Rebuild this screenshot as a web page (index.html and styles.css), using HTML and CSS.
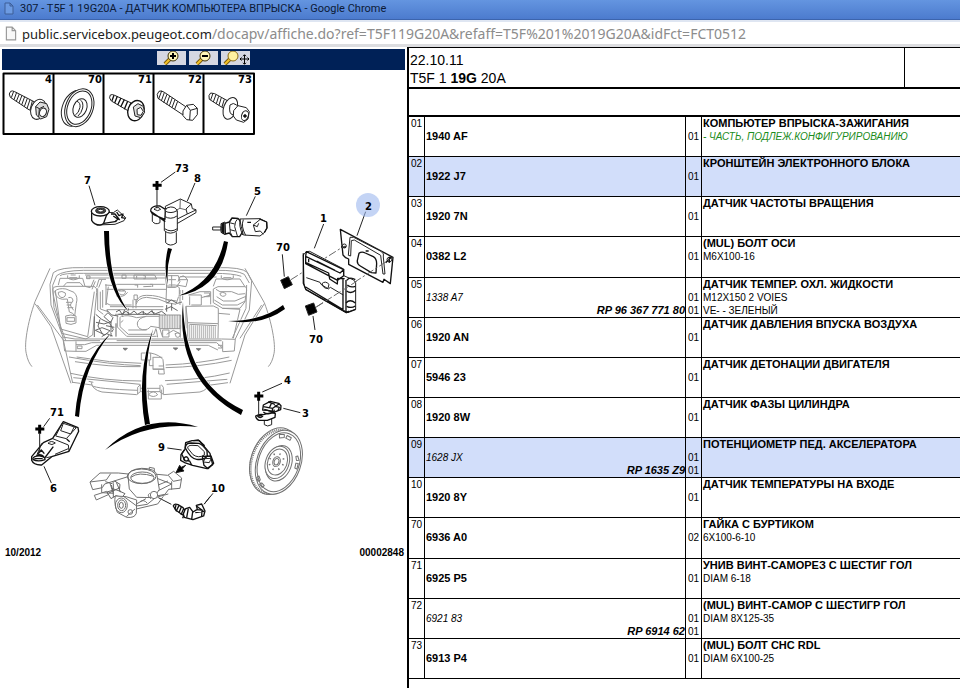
FILE: index.html
```html
<!DOCTYPE html>
<html lang="ru">
<head>
    <meta charset="UTF-8">
    <meta name="viewport" content="width=device-width, initial-scale=1.0">
    <title>307 - T5F 1 19G20A - ДАТЧИК КОМПЬЮТЕРА ВПРЫСКА</title>
    <link rel="stylesheet" href="styles.css">
</head>
<body>
    <header class="title-bar">
        <svg class="page-icon" viewBox="0 0 10 13"><path d="M1 1h5l3 3v8H1zM6 1v3h3"/></svg>
        <span>307 - T5F 1 19G20A - ДАТЧИК КОМПЬЮТЕРА ВПРЫСКА - Google Chrome</span>
    </header>
    <div class="address-bar">
        <svg class="page-icon light" viewBox="0 0 10 13"><path d="M1 1h5l3 3v8H1zM6 1v3h3"/></svg>
        <span><span class="host">public.servicebox.peugeot.com</span>/docapv/affiche.do?ref=T5F119G20A&amp;refaff=T5F%201%2019G20A&amp;idFct=FCT0512</span>
    </div>
    <main class="content">
        <section class="diagram">
            <div class="toolbar">
                <button class="tool" aria-label="Zoom in">
                    <svg viewBox="0 0 29 14"><path class="handle-edge" d="M13 8L8 13"/><path class="handle" d="M13 8L8 13"/><circle class="lens" cx="16" cy="5" r="5"/><path class="sign" d="M13 5h6M16 2v6"/></svg>
                </button>
                <button class="tool" aria-label="Zoom out">
                    <svg viewBox="0 0 29 14"><path class="handle-edge" d="M13 8L8 13"/><path class="handle" d="M13 8L8 13"/><circle class="lens" cx="16" cy="5" r="5"/><path class="sign" d="M13 5h6"/></svg>
                </button>
                <button class="tool" aria-label="Move">
                    <svg viewBox="0 0 29 14"><path class="handle-edge" d="M9 8L4 13"/><path class="handle" d="M9 8L4 13"/><circle class="lens plain" cx="12" cy="5" r="5"/><path class="move" d="M19 8h9M23.500 4v9M20.500 6.500L19 8l1.500 1.500M26.500 6.500L28 8l-1.500 1.500M22 5.200l1.500-1.500L25 5.200M22 11.800l1.500 1.500 1.500-1.500"/></svg>
                </button>
            </div>
            <svg class="drawing" viewBox="0 70 406 490">
                <!-- fastener legend -->
                <g class="frame"><path d="M3.500 73.500H254V134H3.500zM53.500 73v61M103.500 73v61M153.500 73v61M203.500 73v61"/></g>
                <g class="part" transform="scale(.3333)">
                    <path d="M32 274Q24 281 31 292L88 330Q96 332 98 321L104 306L44 275Q37 271 32 274zM41 274L34 293M50 277L42 299M58 282L49 304M66 286L57 309M74 290L65 315M82 295L73 320M90 299L81 326M97 303L90 330"/>
                    <ellipse class="solid" cx="115" cy="328" rx="22" ry="31" transform="rotate(20 115 328)"/>
                    <path class="solid shade" d="M107 320L120 306L140 311L147 328L140 350L122 357L109 345z"/>
                    <path d="M107 320L118 326L116 351M118 326L132 319"/>
                    <ellipse class="solid" cx="129" cy="337" rx="10" ry="13" transform="rotate(20 129 337)"/>

                    <ellipse cx="225" cy="325" rx="38" ry="56" transform="rotate(22 225 325)"/>
                    <ellipse class="solid" cx="238" cy="323" rx="41" ry="59" transform="rotate(22 238 323)"/>
                    <ellipse cx="238" cy="323" rx="35" ry="52" transform="rotate(22 238 323)"/>
                    <ellipse cx="240" cy="324" rx="20" ry="29" transform="rotate(22 240 324)"/>
                    <path d="M231 304Q242 308 240 322Q236 340 226 345M241 300Q251 306 248 324Q244 340 234 348"/>

                    <path d="M331 285Q325 293 334 303L389 335L398 311L344 286Q336 282 331 285z"/>
                    <path class="heavy" d="M342 286L336 302M352 289L344 309M363 294L353 315M373 299L362 321M383 304L373 328M393 309L384 335"/>
                    <ellipse class="solid heavy" cx="408" cy="332" rx="24" ry="31" transform="rotate(20 408 332)"/>
                    <path class="solid shade" d="M400 321L414 311L430 319L434 337L422 353L405 348z"/>
                    <path class="solid" d="M411 328L422 322L430 334L423 346L412 344z"/>

                    <path d="M477 274Q468 282 474 295L548 344L560 322L493 277Q483 270 477 274zM485 273L476 297M493 278L484 303M501 283L491 308M509 288L500 313M517 293L508 318M525 299L516 323M533 304L524 328"/>
                    <path class="solid" d="M549 333L560 316L580 313L592 325L592 344L578 361L560 359L549 347zM560 316L571 331L569 360M571 331L592 325"/>

                    <path d="M632 279Q624 285 628 298L674 327L684 303L644 281zM639 280L632 300M648 284L640 306M656 289L649 311M664 293L657 316M673 298L666 321"/>
                    <ellipse class="solid" cx="691" cy="325" rx="20" ry="34" transform="rotate(20 691 325)"/>
                    <path class="solid" d="M690 315Q700 306 710 315L717 322L710 350L700 345Q685 343 690 315z"/>
                    <path class="solid" d="M701 332L714 317L739 323L748 335L744 357L731 367L709 360L700 348z"/>
                    <ellipse cx="735" cy="347" rx="10" ry="15" transform="rotate(20 735 347)"/><circle class="fill" cx="735" cy="348" r="4"/>
                </g>

                <!-- engine bay -->
                <g class="car" transform="translate(0 255) scale(.3333)">
                    <path d="M150 40L105 140C82 205 72 270 79 296Q84 322 96 335M105 146L153 215L213 385M112 150L190 255L218 384M735 40L793 143C815 200 828 270 822 296Q817 322 805 335M793 146L735 240L690 385M785 150L720 250"/>
                    <path d="M150 88L160 53Q180 36 250 38H650Q725 36 742 52L755 78M158 91L170 62Q188 47 250 46H650Q710 45 733 58L748 84M180 62Q190 54 250 55H640Q700 55 724 64M255 60H500M258 69H500M555 66H650"/>
                    <path d="M150 88L153 150L188 243L194 288L228 289V259M158 91L162 158L197 256M755 78L748 165L706 252L703 288L668 290V259M740 90L738 160L697 250"/>
                    <path d="M175 90L180 70H248L255 94L270 98M190 94L200 83H240L250 94M203 61V69Q219 80 238 69V61M208 68h24M212 60h15M640 94L648 72H720L735 95M664 61V69Q681 80 700 69V61M670 68h24"/>
                    <path d="M158 102Q160 94 174 94H280Q292 96 290 112L278 240L258 252L185 235L160 120zM166 106L182 222L263 245L283 110"/>
                    <path d="M164 109Q175 98 198 102L222 112Q235 125 229 145L224 183Q220 173 208 171L202 132Q168 138 164 109zM175 112Q186 106 196 114Q199 126 186 128Q174 124 175 112zM205 128Q218 124 219 138L210 150L221 166M198 142h18M200 150h14M202 158h18M197 183Q213 177 228 183V204Q213 212 198 205zM201 188h23v11h-23z"/>
                    <path d="M290 96L297 73L318 73M272 98L282 74M276 103L286 79M296 98L306 73M301 110V162L324 170M308 105V158M293 100V165L310 178M318 88V150M315 90L345 92L352 88H495M318 150L325 95M320 103L500 103M320 145L330 150H395M330 155H490M320 164H490"/>
                    <path d="M260 63h10v8h-10zM366 60h12v10h-12zM402 60h62l6 12h-68zM410 63v8M430 62h6v9h-6M430 95L455 94M404 90h9v8M450 88h8v8M496 62L535 62L540 80L530 96H500zM505 74h23M515 60V95M530 90L558 95L563 75L555 65L540 65L534 80M536 74h26M542 66Q550 59 556 66"/>
                    <path d="M500 90H526L538 98V118L528 148L498 142zM503 97H527M498 133L530 138M408 142Q415 120 440 121Q475 120 510 138M408 148Q415 128 440 127Q475 128 508 145M402 120h10v14h-10zM399 134V160M408 134V160M352 108Q365 100 376 108Q378 118 366 120Q352 117 352 108M357 108h16M348 122Q370 130 383 112"/>
                    <path d="M345 178H370L360 188V215L385 238H462L468 220M352 182V216L380 244H470M366 185Q380 178 410 188L440 184H478M370 196L362 203M440 184Q416 188 412 204Q411 220 427 224Q445 226 452 214L478 218M478 180H542V221H478zM385 225H440"/>
                    <path class="ribs" d="M483 180V221M488 180V221M493 180V221M498 180V221M503 180V221M508 180V221M513 180V221M518 180V221M523 180V221M528 180V221M533 180V221M538 180V221"/>
                    <path d="M566 120L600 110H632V148M566 120H604V150H574M569 124V150M604 128L632 120M612 114h17v11h-17M558 154L640 153L655 160V206L563 203zM563 203V250M568 208L650 212M655 206L654 250M558 154V220"/>
                    <path class="ribs" d="M568 210V250M574 210V250M580 211V250M586 211V250M592 211V250M598 211V250M604 212V250M610 212V250M616 212V250M622 213V250M628 213V250M634 213V250M640 214V250M646 214V250"/>
                    <path d="M640 102L654 95H735Q741 96 740 106L735 140L720 160H668L640 143zM648 103L660 110H695L715 118L735 116M650 125L670 138H705L738 124M643 135L667 150H712L736 138M660 115Q668 109 677 115Q680 123 668 124Q659 122 660 115M667 160L720 163L700 250M655 175L690 178"/>
                    <path class="dark" d="M348 171l10-6 8 12 12-8 12 9 12-10 11 10 13-8 15 8 12-9 14 7 18-7 13 10M355 178h125M374 164l-5 14M385 160v20M430 168v12M455 165l8 14M287 178l18 15 24 12 11 18-10 18M288 202l24 5 21-7M283 184v62M300 193l-6 20 14 25M312 185l12-12 15 15-7 15zM286 226l20-8 24 9-15 13zM318 212l25 5M333 200v45M348 205v40M305 245l15-9 18 7M320 165l15 15 20 3M500 145l14-10 18 10 14-4M495 163l18-8 20 12M500 150v20M515 145v22"/>
                    <path d="M469 223L473 247M480 222L488 247M488 225h19v21h-19zM500 238l20-12 20 10M525 236Q535 230 541 238Q539 250 529 246zM540 105V150M548 105V135M541 210V248M552 210V248"/>
                    <path d="M188 246L225 252H665L705 253M190 257H300M350 257H665M228 269H254L275 263H650L665 277M232 273h14v8h-14zM654 271h12v8h-12M228 289H258L290 271H625L654 285"/>
                    <path d="M207 306Q330 329 422 332M230 306Q330 324 424 325M225 320Q330 337 422 335M497 330Q600 326 688 306M497 338Q600 336 695 316M212 355Q310 378 424 378M495 377Q602 375 689 354M220 368L420 388M500 388L682 373M218 382L276 390M684 383L626 391"/>
                    <path d="M424 294H452V315H424zM452 294Q480 300 489 314L493 357H476V346M458 307H487M458 343H493M448 315V332H460M459 307V342H492M476 333H490"/>
                    <path d="M274 382Q276 404 306 411L410 419L421 410V389L413 397V418M266 379L280 382M276 392Q290 402 413 406M490 419L600 411Q626 404 628 382M484 389L490 397V418L480 411V390M421 400H480M421 410H480M445 404V432H484V404M446 419Q460 402 473 419Q460 430 446 419"/>
                    <path class="holes" d="M369 280h13l-6 6zM520 279h13l-6 6zM589 281h13l-6 6z"/>
                </g>

                <!-- sensors above the engine -->
                <g class="part" transform="translate(0 150) scale(.3333)">
                    <path class="solid" d="M312 187L340 188L352 180L377 203L372 212L345 223L290 225z"/>
                    <path class="solid heavy" d="M275 182V211Q283 225 300 225Q311 224 313 214L319 197L328 185"/>
                    <ellipse class="solid heavy" cx="301" cy="184" rx="27" ry="14"/><ellipse class="dark" cx="302" cy="182" rx="15" ry="8"/><ellipse class="solid" cx="302" cy="182" rx="8" ry="4"/>
                    <path class="heavy" d="M340 198l14 10-8 6M350 186l7 11 12-5-4 11 12 2M333 192h12l14 18M312 220L350 214"/>
                    <path class="solid" d="M496 169L541 147L574 162L577 176L588 179V188L531 221L520 208L498 190zM574 162L558 177L562 192L530 208M588 180L562 192"/>
                    <path class="thin" d="M541 147L540 175L515 187M540 175L560 180"/>
                    <path class="solid" d="M457 191V214Q466 226 480 218V198M493 205V242Q510 257 532 242V182L495 182zM497 246V278Q510 292 529 279V247"/>
                    <path class="solid heavy" d="M453 177Q460 165 480 168L496 178L495 208L475 200Q447 190 453 177zM451 183L496 215"/>
                    <path class="solid" d="M495 183Q498 171 512 171Q528 171 531 182Q513 193 495 183zM494 199Q512 211 531 198M462 178Q472 166 482 178Q474 186 462 178zM494 236Q513 249 532 236"/>
                    <path class="line" d="M267 107L285 166M526 66L483 97M471 119V175M585 99L562 153"/>
                    <path class="cross" d="M458 106h27M471 93v27"/>
                </g>
                <g class="part" transform="translate(200 150) scale(.3333)">
                    <path class="solid" d="M38 231H63V240H38zM63 221L75 216V254L63 247z"/>
                    <path class="heavy" d="M66 220v28M70 218v34"/>
                    <path class="solid heavy" d="M75 220L88 216L96 204L114 205L124 218L130 242L119 260L97 260L88 249L76 252z"/>
                    <path class="solid" d="M119 207L180 206L200 216L201 234L193 248L180 258L130 255L124 230z"/>
                    <path d="M97 204L88 218L91 247L97 260M114 205Q104 214 104 230L112 258M88 218L104 222M90 239L105 243M121 208Q115 225 128 255M130 209Q122 229 137 256M182 207L160 225L166 245L181 243L190 253M160 225L172 230L176 220"/>
                    <path class="heavy" d="M142 217h11M178 207l22 9 1 18-8 14"/>
                    <path class="line" d="M166 139L139 197M371 222L343 295M497 185L471 257M247 313L253 380M339 498L345 540"/>
                    <path class="solid heavy" d="M421 238L579 322L571 401L552 388L549 397L446 343V327L437 323L429 315z"/>
                    <path class="solid" d="M450 262H461L543 304Q554 311 550 321L555 372H549L542 316L463 270L454 272L452 318L445 316z"/>
                    <path class="solid heavy" d="M477 310Q485 303 496 309L520 320Q530 326 530 341L528 369L514 368L481 348Q471 343 472 332z"/>
                    <circle cx="433" cy="288" r="6"/><circle cx="568" cy="329" r="7"/><path class="heavy" d="M557 338l18-18M568 320v18M423 291h15M497 303h9"/>
                    <path class="line thin" stroke-dasharray="24 7 7 7" d="M273 389L433 288M349 471L568 329"/>
                    <path class="solid" d="M310 315L319 305L329 304L431 357V377L461 390L467 398V478L439 488L317 418L312 402z"/>
                    <path class="heavy" d="M310 310V400L318 419L439 488L448 483M319 305L431 359L420 369L317 319zM431 357V377L413 391L317 341V320M318 338L386 369L389 387L412 402L413 385L434 386M429 388V479L317 411M438 390V486M326 323v14M350 333l55 28"/>
                    <path class="heavy" d="M440 391Q450 379 466 389M442 405Q450 414 466 409M440 423Q453 433 467 421M438 459Q450 446 466 459M440 469Q454 476 466 468M430 482l14 5 23-9"/>
                    <path d="M319 383L360 397L363 403L385 417L391 412L430 435M366 401Q376 391 387 403L384 415Q370 417 366 401z"/>
                    <path class="line thin" stroke-dasharray="24 7" d="M349 471L470 394"/>
                    <path class="fill" d="M242 391L265 380L277 404L253 416zM316 468L341 459L351 486L326 496z"/>
                </g>

                <!-- lower left: sensor and throttle body -->
                <g class="part" transform="translate(0 320) scale(.3333)">
                    <path class="solid heavy" d="M95 410L130 368L158 355L190 305L234 323L236 334L207 394L155 410L125 435Q101 436 95 421z"/>
                    <path d="M167 348L199 356L229 323L187 309zM158 356L205 375L207 393M125 370L110 407M190 310L182 332L212 342L223 320M155 410L139 413M165 403L205 386M144 370Q153 360 166 369Q157 378 144 370"/>
                    <path class="heavy" d="M98 418Q100 407 121 408Q137 411 135 419Q113 427 98 418M107 410Q119 398 132 410M113 402L124 390L133 401M103 416h25M200 357L209 365M134 414L160 380"/>
                    <path class="line" d="M149 295L131 320M119 341V400M132 439L154 489M502 384L545 390M475 533L514 553M630 530L613 552"/>
                    <path class="cross" d="M106 327h27M119 314v27"/>
                    <g class="grey">
                        <path class="solid" d="M384 468Q386 448 425 445Q467 445 471 466L478 508L465 529L495 523L506 508L540 505L545 474L521 454L503 466L471 463M384 468L388 507L410 532L465 533L505 522M384 462L355 459L300 459L270 486L278 509L307 503L314 492L384 470M270 486L319 480L332 461M305 493V518L340 520L330 490M283 526L320 514L325 524L289 540zM505 466L520 484L545 479M515 484V509M471 475L515 492L475 512M475 495L504 483"/>
                        <ellipse class="heavy" cx="425" cy="469" rx="43" ry="22"/><ellipse cx="427" cy="473" rx="35" ry="17"/><path d="M393 472Q415 454 461 469M448 449V442L463 445V457"/>
                        <path class="heavy" d="M316 485l20 6 8-8 16 10-2 20 17 8-9 11-18-5-15 9-12-20 17-5-4-16M335 505l26 9M327 519l33-16M340 490v42M349 487l13 30"/>
                        <path class="solid" d="M346 528L378 530L410 540L409 580Q404 595 380 592L352 577Q341 548 346 528z"/>
                        <ellipse cx="364" cy="556" rx="18" ry="22"/><ellipse cx="365" cy="556" rx="12" ry="16"/><ellipse class="heavy" cx="364" cy="556" rx="6" ry="9"/><circle cx="391" cy="576" r="7"/>
                        <path d="M372 530L410 558L442 553L470 530M411 551L438 536M379 590L405 567M409 567L473 552L490 529M420 545Q432 537 442 550"/><circle class="solid" cx="462" cy="525" r="11"/><path d="M449 520Q439 527 453 536"/>
                    </g>
                    <path class="fill" d="M528 458L539 436L544 442L557 436L547 447L552 453z"/>
                    <path class="solid heavy" d="M555 388L557 368L576 362L598 362L630 400L638 434L621 446L578 436L556 429L542 421L543 404z"/>
                    <path class="solid heavy" d="M556 384Q556 369 573 369L597 370Q606 372 621 392L622 408Q611 421 590 418Q572 416 556 384z"/>
                    <path class="solid" d="M563 384Q563 376 576 376L594 377L613 395L613 405Q596 416 579 404z"/>
                    <path class="heavy" d="M580 362l15-2 19 17M553 390l-8 12 10 20 14 1 6 12M550 417Q559 403 566 418Q559 429 550 417M607 409l26-1 8 22-17 16-12-10z"/>
                    <path d="M615 416l19-1-6 13-18-2z"/>
                    <path class="solid heavy" d="M520 558Q522 550 534 554L549 563L556 573L548 585L528 571z"/>
                    <path class="heavy" d="M528 555l-3 13M537 557l-9 17M544 561l-7 17M551 566l-8 18M560 564l-12 31"/>
                    <path class="solid heavy" d="M556 567L569 562L579 576L592 568L589 556L605 552L615 573L611 588L579 599L553 592L550 582z"/>
                    <path class="heavy" d="M565 566l-5 27M578 576l-3 22M591 569l19 2M586 578l27-4M589 558l17 12-1 20"/>
                </g>

                <!-- flywheel and its sensor -->
                <g class="part" transform="translate(200 320) scale(.3333)">
                    <path class="solid" d="M193 292V314Q202 322 215 314V290"/>
                    <path class="solid heavy" d="M167 288Q178 281 190 284L215 278L226 281L225 292L202 301L177 301Q168 298 167 288zM190 276Q202 286 221 277L223 269M188 270L190 255L211 244L236 250L243 257L242 269L225 276L203 271z"/>
                    <path class="heavy" d="M190 260L218 265L237 252M215 248l-6 14M218 265l-2 12M223 258l15 4-4 10M172 289q8-5 16 0q-7 7-16 0M193 268l22 7M204 246l21 7"/>
                    <path class="line" d="M246 190L187 216M176 240V291M250 265L301 278M39 520L12 553"/>
                    <path class="cross" d="M163 228h27M176 215v27"/>
                    <g class="grey" transform="rotate(20 229 424)">
                        <ellipse class="solid" cx="225" cy="425" rx="72" ry="103"/>
                        <ellipse class="teeth" cx="225" cy="427" rx="69" ry="98"/>
                        <ellipse class="solid" cx="237" cy="424" rx="66" ry="99"/>
                        <ellipse cx="237" cy="424" rx="61" ry="91"/>
                        <ellipse cx="238" cy="427" rx="38" ry="55"/><ellipse class="solid" cx="233" cy="426" rx="35" ry="50"/><ellipse cx="233" cy="425" rx="29" ry="40"/>
                        <ellipse class="bolts" cx="230" cy="425" rx="21" ry="25"/><ellipse cx="230" cy="425" rx="11" ry="15"/><ellipse cx="230" cy="425" rx="7" ry="10"/>
                        <path d="M210 345l14-5 3 9-13 6zM233 340l14 2-1 9-14-2zM284 387l8 11-7 3-6-11zM293 408l2 17-7-1-2-15zM190 490l8 9 5-6-8-10zM205 506l11 6 4-7-10-5z"/>
                    </g>
                </g>

                <!-- pointers into the engine bay -->
                <g class="pointer">
                    <path d="M104 231h5Q109 286 129 312Q105 290 104 231z"/>
                    <path d="M168 248l4 1Q166 266 168 285Q163 268 168 248z"/>
                    <path d="M224 241l4 1Q221 289 178 296Q215 282 224 241z"/>
                    <path d="M283 305l2 4Q262 326 228 321Q262 321 283 305z"/>
                    <path d="M75 416l4 1Q83 365 112 332Q79 362 75 416z"/>
                    <path d="M145 425l5-1Q141 376 153 329Q136 375 145 425z"/>
                    <path d="M183 302Q184 382 243 410L241 415Q175 380 183 302z"/>
                    <path d="M105 450Q145 411 198 427Q145 421 105 450z"/>
                </g>

                <circle class="marker" cx="368" cy="205" r="12"/>
                <g class="labels">
                    <g text-anchor="end">
                        <text x="52" y="83">4</text><text x="102" y="83">70</text><text x="152" y="83">71</text><text x="202" y="83">72</text><text x="252" y="83">73</text>
                    </g>
                    <text x="84" y="184">7</text><text x="175" y="172">73</text><text x="194" y="182">8</text>
                    <text x="254" y="195">5</text><text x="365" y="210">2</text><text x="320" y="222">1</text>
                    <text x="276" y="251">70</text><text x="309" y="343">70</text><text x="284" y="384">4</text>
                    <text x="302" y="417">3</text><text x="50" y="416">71</text><text x="50" y="492">6</text>
                    <text x="158" y="451">9</text><text x="211" y="492">10</text>
                </g>
                <g class="captions">
                    <text x="5" y="556">10/2012</text><text x="404" y="556" text-anchor="end">00002848</text>
                </g>
            </svg>
        </section>

        <section class="parts">
            <div class="vehicle">
                <div class="vehicle-info">
                    <div>22.10.11</div>
                    <div>T5F 1 <b>19G</b> 20A</div>
                </div>
                <div class="vehicle-side"></div>
            </div>
            <div class="spacer"></div>
            <table class="parts-table">
                <colgroup><col class="col-num"><col class="col-ref"><col class="col-qty"><col></colgroup>
                <tbody>
                    <tr><td class="num">01</td><td><br><b>1940 AF</b></td><td class="qty"><br>01</td><td><b class="name">КОМПЬЮТЕР ВПРЫСКА-ЗАЖИГАНИЯ</b><i class="note">- ЧАСТЬ, ПОДЛЕЖ.КОНФИГУРИРОВАНИЮ</i></td></tr>
                    <tr class="selected"><td class="num">02</td><td><br><b>1922 J7</b></td><td class="qty"><br>01</td><td><b class="name">КРОНШТЕЙН ЭЛЕКТРОННОГО БЛОКА</b></td></tr>
                    <tr><td class="num">03</td><td><br><b>1920 7N</b></td><td class="qty"><br>01</td><td><b class="name">ДАТЧИК ЧАСТОТЫ ВРАЩЕНИЯ</b></td></tr>
                    <tr><td class="num">04</td><td><br><b>0382 L2</b></td><td class="qty"><br>01</td><td><b class="name">(MUL) БОЛТ ОСИ</b><span class="desc">M6X100-16</span></td></tr>
                    <tr><td class="num">05</td><td><br><i class="old">1338 A7</i><b class="replaced">RP 96 367 771 80</b></td><td class="qty"><br>01<br>01</td><td><b class="name">ДАТЧИК ТЕМПЕР. ОХЛ. ЖИДКОСТИ</b><span class="desc">M12X150 2 VOIES<br>VE- - ЗЕЛЕНЫЙ</span></td></tr>
                    <tr><td class="num">06</td><td><br><b>1920 AN</b></td><td class="qty"><br>01</td><td><b class="name">ДАТЧИК ДАВЛЕНИЯ ВПУСКА ВОЗДУХА</b></td></tr>
                    <tr><td class="num">07</td><td><br><b>5946 23</b></td><td class="qty"><br>01</td><td><b class="name">ДАТЧИК ДЕТОНАЦИИ ДВИГАТЕЛЯ</b></td></tr>
                    <tr><td class="num">08</td><td><br><b>1920 8W</b></td><td class="qty"><br>01</td><td><b class="name">ДАТЧИК ФАЗЫ ЦИЛИНДРА</b></td></tr>
                    <tr class="selected"><td class="num">09</td><td><br><i class="old">1628 JX</i><b class="replaced">RP 1635 Z9</b></td><td class="qty"><br>01<br>01</td><td><b class="name">ПОТЕНЦИОМЕТР ПЕД. АКСЕЛЕРАТОРА</b></td></tr>
                    <tr><td class="num">10</td><td><br><b>1920 8Y</b></td><td class="qty"><br>01</td><td><b class="name">ДАТЧИК ТЕМПЕРАТУРЫ НА ВХОДЕ</b></td></tr>
                    <tr><td class="num">70</td><td><br><b>6936 A0</b></td><td class="qty"><br>02</td><td><b class="name">ГАЙКА С БУРТИКОМ</b><span class="desc">6X100-6-10</span></td></tr>
                    <tr><td class="num">71</td><td><br><b>6925 P5</b></td><td class="qty"><br>01</td><td><b class="name">УНИВ ВИНТ-САМОРЕЗ С ШЕСТИГ ГОЛ</b><span class="desc">DIAM 6-18</span></td></tr>
                    <tr><td class="num">72</td><td><br><i class="old">6921 83</i><b class="replaced">RP 6914 62</b></td><td class="qty"><br>01<br>01</td><td><b class="name">(MUL) ВИНТ-САМОР С ШЕСТИГР ГОЛ</b><span class="desc">DIAM 8X125-35</span></td></tr>
                    <tr><td class="num">73</td><td><br><b>6913 P4</b></td><td class="qty"><br>01</td><td><b class="name">(MUL) БОЛТ CHC RDL</b><span class="desc">DIAM 6X100-25</span></td></tr>
                </tbody>
            </table>
        </section>
    </main>
</body>
</html>
```

FILE: styles.css
```css
* {
    box-sizing: border-box;
}
body {
    margin: 0;
    min-height: 100vh;
    display: flex;
    flex-direction: column;
    font-family: "Liberation Sans", Arial, sans-serif;
    background-color: #fff;
    color: #000;
}
.title-bar {
    display: flex;
    align-items: center;
    gap: 6px;
    height: 20px;
    padding: 0 4px 2px;
    background: linear-gradient(#6495e0, #4c7bce);
    border-bottom: 1px solid #3c64ad;
    color: #0c1a36;
    font-family: Roboto, sans-serif;
    font-size: 11px;
    white-space: nowrap;
}
.page-icon {
    width: 10px;
    height: 13px;
    fill: #6d9be2;
    stroke: #3f5f97;
}
.page-icon.light {
    width: 12px;
    height: 15px;
    fill: #f8f8f8;
    stroke: #999;
}
.address-bar {
    display: flex;
    align-items: center;
    gap: 5px;
    height: 27px;
    padding: 0 5px;
    border-top: 2px solid #dfe6f2;
    border-bottom: 3px solid #dcdde0;
    font-family: "Noto Sans", sans-serif;
    font-size: 14px;
    color: #8c8c8c;
    white-space: nowrap;
}
.host {
    font-size: 13px;
    color: #222;
}
.content {
    flex: 1;
    display: grid;
    grid-template-columns: 407px 1fr;
}
.diagram {
    padding: 2px 1px 0 0;
}
.toolbar {
    display: flex;
    justify-content: center;
    align-items: flex-start;
    gap: 3px;
    height: 21px;
    margin: 0 1px 0 2px;
    padding-top: 2px;
    background-color: #002157;
}
.tool {
    width: 29px;
    height: 14px;
    padding: 0;
    border: none;
    background-color: #d5d7e2;
    cursor: pointer;
}
.tool svg {
    display: block;
    fill: none;
}
.lens {
    fill: #fff6b8;
    stroke: #3d3108;
}
.lens.plain {
    fill: #fff1a0;
    stroke: #8a6a14;
}
.handle-edge {
    stroke: #7a5c10;
    stroke-width: 4;
}
.handle {
    stroke: #f5c228;
    stroke-width: 2;
}
.sign {
    stroke: #000;
    stroke-width: 2;
}
.move {
    stroke: #000;
}
.drawing {
    display: block;
    width: 100%;
    fill: none;
    stroke-linejoin: round;
}
.frame {
    stroke: #000;
    stroke-width: 2;
}
.part {
    stroke: #222;
    stroke-width: 3;
}
.part .solid {
    fill: #fff;
}
.part .shade {
    fill: #ddd;
}
.part .heavy {
    stroke: #111;
    stroke-width: 4;
}
.part .fill {
    fill: #000;
}
.part .dark {
    fill: #444;
}
.part .thin {
    stroke: #666;
}
.cross {
    stroke: #000;
    stroke-width: 9;
}
.grey {
    stroke: #707070;
}
.part .grey .heavy {
    stroke: #666;
    stroke-width: 3;
}
.part .grey .teeth {
    stroke: #777;
    stroke-width: 8;
    stroke-dasharray: 3 3;
}
.part .grey .bolts {
    stroke-width: 5;
    stroke-dasharray: 4 14;
}
.car {
    stroke: #999;
    stroke-width: 3;
}
.car .dark {
    stroke: #666;
}
.car .ribs {
    stroke: #888;
    stroke-width: 2;
}
.car .holes {
    fill: #777;
    stroke: #777;
}
.pointer {
    fill: #000;
    stroke: #fff;
    paint-order: stroke;
}
.marker {
    fill: #9cb8ee;
    fill-opacity: 0.6;
}
.labels {
    fill: #000;
    font: bold 10px "DejaVu Sans", sans-serif;
}
.captions {
    fill: #000;
    font: bold 10px "Liberation Sans", sans-serif;
}
.parts {
    border-left: 2px solid #000;
    border-top: 1px solid #000;
}
.vehicle {
    display: grid;
    grid-template-columns: 9fr 1fr;
    height: 41px;
    border-bottom: 2px solid #000;
    font-size: 14px;
    line-height: 18px;
}
.vehicle-info {
    padding: 3px 1px 0;
    border-right: 1px solid #000;
}
.spacer {
    height: 26px;
}
.parts-table {
    width: 100%;
    height: calc(100vh - 124px);
    border-top: 2px solid #000;
    border-spacing: 0;
    table-layout: fixed;
    font-size: 11px;
    line-height: 13px;
}
.parts-table tr {
    height: 40px;
}
.col-num,
.col-qty {
    width: 16px;
}
.col-ref {
    width: 261px;
}
.parts-table td {
    padding: 0 0 0 1px;
    vertical-align: top;
    border-right: 1px solid #000;
    border-bottom: 1px solid #000;
}
.parts-table td:last-child {
    border-right: none;
}
.parts-table .num,
.parts-table .qty {
    font-size: 10px;
    padding-left: 2px;
}
.selected {
    background-color: #d2defa;
}
.name,
.note,
.desc,
.old,
.replaced {
    display: block;
}
.note {
    color: #1c8c1c;
}
.note,
.desc,
.old {
    font-size: 10px;
}
.replaced {
    font-style: italic;
    text-align: right;
}
```
